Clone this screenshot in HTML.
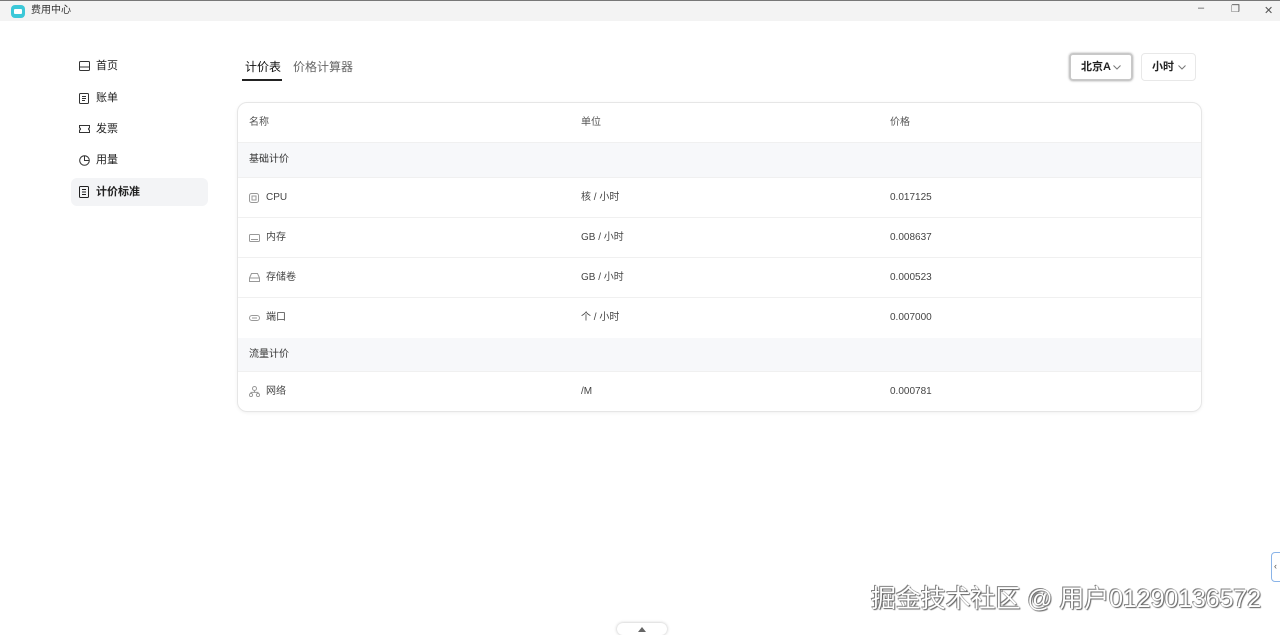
<!DOCTYPE html>
<html><head><meta charset="utf-8"><style>
*{box-sizing:border-box;margin:0;padding:0}
body{width:1280px;height:632px;overflow:hidden;background:#fff;font-family:"Liberation Sans","Noto Sans CJK SC",sans-serif;color:#333;position:relative}
.tb{position:absolute;left:0;top:0;width:1280px;height:21px;background:#f3f3f3;border-top:1px solid #777}
.tb .logo{position:absolute;left:11px;top:4px;width:14px;height:13px;border-radius:4px;background:#3cc8d8}
.tb .logo:after{content:"";position:absolute;left:3px;top:4px;width:8px;height:5px;background:#fff;border-radius:1px}
.tb .t{position:absolute;left:31px;top:0;line-height:20px;font-size:10px;color:#333}
.tb .w{position:absolute;top:3px;font-size:11px;color:#555}
.nav{position:absolute;left:71px;width:137px;height:28px;font-size:11px;color:#222;line-height:28px;padding-left:25px}
.nav.a{background:#f3f4f6;border-radius:6px;font-weight:bold}
.nav svg{position:absolute;left:8px;top:9px}
.tab{position:absolute;top:57px;line-height:20px;font-size:12px}
.dd{position:absolute;top:53px;height:28px;border:1px solid #e8e8e8;border-radius:4px;font-size:11px;font-weight:bold;line-height:26px;padding-left:10px;color:#222}
.dd svg{position:absolute;right:9px;top:11px}
.card{position:absolute;left:237px;top:102px;width:965px;height:310px;border:1px solid #e6e6e6;border-radius:10px;overflow:hidden;box-shadow:0 1px 3px rgba(0,0,0,.06)}
.r{position:absolute;left:0;width:100%;font-size:10px;color:#444;border-bottom:1px solid #f0f0f0}
.r span{position:absolute;top:0;line-height:inherit}
.g{background:#f7f8fa;color:#333}
.ic{position:absolute;left:11px}
.wm{position:absolute;left:871px;top:582px;font-size:25px;color:#fff;text-shadow:0 0 1px #555,1px 1px 1px #666,-1px -1px 0 #888;letter-spacing:-0.1px;line-height:34px}
</style></head><body>
<div class="tb"><div class="logo"></div><div class="t">费用中心</div>
<div class="w" style="left:1198px;top:1px">–</div><div class="w" style="left:1231px;font-size:10px">❐</div><div class="w" style="left:1264px">✕</div></div>

<div class="nav" style="top:52px"><svg width="11" height="10"><rect x=".5" y=".5" width="10" height="9" rx="1" fill="none" stroke="#333"/><line x1="1" y1="6" x2="10" y2="6" stroke="#333"/></svg>首页</div>
<div class="nav" style="top:84px"><svg width="10" height="11"><rect x=".5" y=".5" width="9" height="10" rx="1" fill="none" stroke="#333"/><path d="M3 3.5h4M3 5.5h4M3 7.5h3" stroke="#333"/></svg>账单</div>
<div class="nav" style="top:115px"><svg width="11" height="10"><path d="M.5 1.5h10v2.5a1 1 0 0 0 0 2v2.5h-10v-2.5a1 1 0 0 0 0-2z" fill="none" stroke="#333"/></svg>发票</div>
<div class="nav" style="top:146px"><svg width="11" height="11"><circle cx="5.5" cy="5.5" r="4.8" fill="none" stroke="#333"/><path d="M5.5 .7v4.8h4.8" fill="none" stroke="#333"/></svg>用量</div>
<div class="nav a" style="top:178px"><svg width="10" height="12" style="top:8px"><rect x=".5" y=".5" width="9" height="11" rx="1" fill="none" stroke="#222"/><path d="M3 3.5h4M3 6h4M3 8.5h4" stroke="#222"/></svg>计价标准</div>

<div class="tab" style="left:245px;color:#111">计价表</div>
<div style="position:absolute;left:242px;top:79px;width:40px;height:2px;background:#222"></div>
<div class="tab" style="left:293px;color:#666">价格计算器</div>

<div class="dd" style="left:1069px;width:64px;border:2px solid #c8c8c8;box-shadow:0 0 2px #aaa;line-height:24px">北京A<svg width="8" height="5" style="right:10px;top:10px"><path d="M.5.5l3.5 3.5 3.5-3.5" fill="none" stroke="#777"/></svg></div>
<div class="dd" style="left:1141px;width:55px">小时<svg width="8" height="5"><path d="M.5.5l3.5 3.5 3.5-3.5" fill="none" stroke="#777"/></svg></div>

<div class="card">
<div class="r" style="top:0;height:40px;line-height:39px;color:#555"><span style="left:11px">名称</span><span style="left:343px">单位</span><span style="left:652px">价格</span></div>
<div class="r g" style="top:40px;height:35px;line-height:33px"><span style="left:11px">基础计价</span></div>
<div class="r" style="top:75px;height:40px;line-height:39px"><svg class="ic" style="top:15px" width="10" height="10"><rect x=".5" y=".5" width="9" height="9" rx="2" fill="none" stroke="#999"/><rect x="3" y="3" width="4" height="4" fill="none" stroke="#999"/></svg><span style="left:28px">CPU</span><span style="left:343px">核 / 小时</span><span style="left:652px">0.017125</span></div>
<div class="r" style="top:115px;height:40px;line-height:39px"><svg class="ic" style="top:16px" width="11" height="8"><rect x=".5" y=".5" width="10" height="7" rx="1" fill="none" stroke="#999"/><path d="M2 5.5h7" stroke="#999"/></svg><span style="left:28px">内存</span><span style="left:343px">GB / 小时</span><span style="left:652px">0.008637</span></div>
<div class="r" style="top:155px;height:40px;line-height:39px"><svg class="ic" style="top:15px" width="11" height="9"><path d="M.5 5l2-4.5h6l2 4.5v3.5h-10z M.5 5h10" fill="none" stroke="#999"/></svg><span style="left:28px">存储卷</span><span style="left:343px">GB / 小时</span><span style="left:652px">0.000523</span></div>
<div class="r" style="top:195px;height:40px;line-height:39px;border-bottom:none"><svg class="ic" style="top:17px" width="11" height="6"><rect x=".5" y=".5" width="10" height="5" rx="2.5" fill="none" stroke="#999"/><path d="M3 3h5" stroke="#999"/></svg><span style="left:28px">端口</span><span style="left:343px">个 / 小时</span><span style="left:652px">0.007000</span></div>
<div class="r g" style="top:235px;height:34px;line-height:33px"><span style="left:11px">流量计价</span></div>
<div class="r" style="top:269px;height:40px;line-height:40px;border-bottom:none"><svg class="ic" style="top:14px" width="11" height="11"><circle cx="5.5" cy="2.5" r="2" fill="none" stroke="#999"/><circle cx="2" cy="9" r="1.6" fill="none" stroke="#999"/><circle cx="9" cy="9" r="1.6" fill="none" stroke="#999"/><path d="M5.5 4.5v2M2 7.4v-1h7v1" fill="none" stroke="#999"/></svg><span style="left:28px">网络</span><span style="left:343px">/M</span><span style="left:652px">0.000781</span></div>
</div>

<div style="position:absolute;left:1271px;top:552px;width:14px;height:30px;border:1px solid #8ab4e8;border-radius:4px;background:#fff;font-size:9px;color:#555;padding:8px 0 0 2px">‹</div>
<div style="position:absolute;left:617px;top:623px;width:50px;height:12px;border-radius:6px;background:#fff;box-shadow:0 0 3px #bbb"></div>
<div style="position:absolute;left:638px;top:627px;width:0;height:0;border-left:4px solid transparent;border-right:4px solid transparent;border-bottom:5px solid #666"></div>
<div class="wm">掘金技术社区 @ 用户01290136572</div>
</body></html>
